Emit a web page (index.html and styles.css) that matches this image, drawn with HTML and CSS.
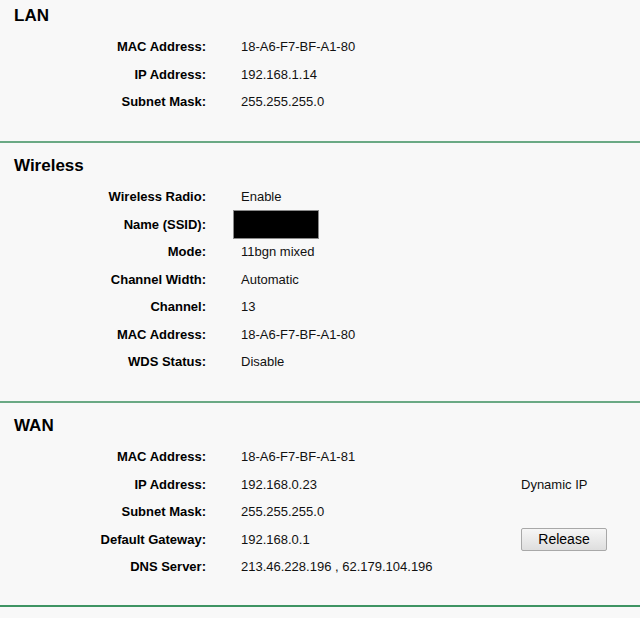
FILE: index.html
```html
<!DOCTYPE html>
<html lang="en">
<head>
    <meta charset="UTF-8">
    <title>Status</title>
    <link rel="stylesheet" href="styles.css">
</head>
<body>
    <div class="section">
        <h2 class="title">LAN</h2>
        <div class="rows">
            <div class="label">MAC Address:</div><div class="value">18-A6-F7-BF-A1-80</div><div class="extra"></div>
            <div class="label">IP Address:</div><div class="value">192.168.1.14</div><div class="extra"></div>
            <div class="label">Subnet Mask:</div><div class="value">255.255.255.0</div><div class="extra"></div>
        </div>
    </div>

    <div class="section">
        <h2 class="title">Wireless</h2>
        <div class="rows">
            <div class="label">Wireless Radio:</div><div class="value">Enable</div><div class="extra"></div>
            <div class="label">Name (SSID):</div><div class="value"><span class="hidden-box"></span></div><div class="extra"></div>
            <div class="label">Mode:</div><div class="value">11bgn mixed</div><div class="extra"></div>
            <div class="label">Channel Width:</div><div class="value">Automatic</div><div class="extra"></div>
            <div class="label">Channel:</div><div class="value">13</div><div class="extra"></div>
            <div class="label">MAC Address:</div><div class="value">18-A6-F7-BF-A1-80</div><div class="extra"></div>
            <div class="label">WDS Status:</div><div class="value">Disable</div><div class="extra"></div>
        </div>
    </div>

    <div class="section section-last">
        <h2 class="title">WAN</h2>
        <div class="rows">
            <div class="label">MAC Address:</div><div class="value">18-A6-F7-BF-A1-81</div><div class="extra"></div>
            <div class="label">IP Address:</div><div class="value">192.168.0.23</div><div class="extra">Dynamic IP</div>
            <div class="label">Subnet Mask:</div><div class="value">255.255.255.0</div><div class="extra"></div>
            <div class="label">Default Gateway:</div><div class="value">192.168.0.1</div><div class="extra"><button class="btn" type="button">Release</button></div>
            <div class="label">DNS Server:</div><div class="value">213.46.228.196 , 62.179.104.196</div><div class="extra"></div>
        </div>
    </div>
</body>
</html>
```

FILE: styles.css
```css
body{
    margin: 0;
    background-color: #f8f8f8;
    font-family: "Liberation Sans", Arial, sans-serif;
    font-size: 13px;
    color: #111;
}

.section{
    padding: 13px 0 25.5px 0;
    border-bottom: 2px solid #6aa984;
}
.section:first-child{
    padding-top: 6px;
}
.section-last{
    padding-bottom: 24px;
    border-bottom-color: #3f9463;
}

.title{
    margin: 0 0 7px 14px;
    font-size: 17px;
    line-height: 20px;
    font-weight: bold;
    color: #000;
}

.rows{
    display: grid;
    grid-template-columns: 206px 280px 1fr;
    grid-auto-rows: 27.5px;
    align-items: center;
}
.label{
    text-align: right;
    font-weight: bold;
    color: #000;
}
.value{
    padding-left: 35px;
}
.extra{
    margin-left: 35px;
}

.hidden-box{
    display: block;
    width: 84px;
    height: 27px;
    margin: -1px 0 -1px -8px;
    background-color: #000;
    border: 1px solid #8a8a8a;
}

.btn{
    width: 86px;
    height: 23px;
    padding: 0;
    font-family: "Liberation Sans", Arial, sans-serif;
    font-size: 14px;
    color: #000;
    background: linear-gradient(#f6f6f6, #dedede);
    border: 1px solid #a8a8a8;
    border-radius: 2px;
}
```
